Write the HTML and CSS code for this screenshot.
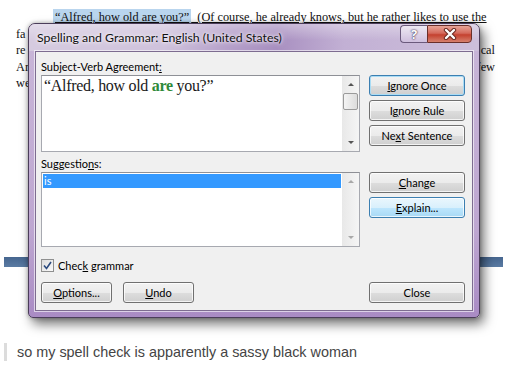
FILE: index.html
```html
<!DOCTYPE html>
<html lang="en">
<head>
    <meta charset="UTF-8">
    <meta name="viewport" content="width=device-width, initial-scale=1.0">
    <title>Spell check</title>
    <link rel="stylesheet" href="styles.css">
</head>
<body>
    <div class="page">
        <!-- document behind the dialog, only the edges show -->
        <div class="article">
            <p class="line first"><span class="sel">“Alfred, how old are you?”</span>&nbsp; (Of course, he already knows, but he rather likes to use the</p>
            <p class="line"><span>fa</span><span></span></p>
            <p class="line"><span>re</span><span>cal</span></p>
            <p class="line"><span>Ar</span><span>few</span></p>
            <p class="line"><span>we</span><span></span></p>
        </div>
        <div class="rule"></div>
        <blockquote class="caption">so my spell check is apparently a sassy black woman</blockquote>

        <!-- the dialog window -->
        <div class="dialog">
            <div class="titlebar">
                <span class="title">Spelling and Grammar: English (United States)</span>
                <div class="caption-btns">
                    <span class="cap-btn help">?</span>
                    <span class="cap-btn close">
                        <svg width="14" height="12" viewBox="0 0 14 12">
                            <path d="M3 2 L11 10 M11 2 L3 10" stroke="#6b2a22" stroke-width="4.4" stroke-linecap="round"/>
                            <path d="M3 2 L11 10 M11 2 L3 10" stroke="#fff" stroke-width="2.4" stroke-linecap="round"/>
                        </svg>
                    </span>
                </div>
            </div>
            <div class="client">
                <div class="grid">
                    <div class="label top-label">Subject-Verb Agreement<u>:</u></div>
                    <div></div>

                    <div class="box sentence-box">
                        <div class="box-text sentence">“Alfred, how old <b class="err">are</b> you?”</div>
                        <div class="scroll">
                            <span class="arrow up"></span>
                            <span class="thumb"></span>
                            <span class="spacer"></span>
                            <span class="arrow down"></span>
                        </div>
                    </div>
                    <div class="btn-stack">
                        <button class="btn default"><u>I</u>gnore Once</button>
                        <button class="btn">I<u>g</u>nore Rule</button>
                        <button class="btn">Ne<u>x</u>t Sentence</button>
                    </div>

                    <div class="label sugg-label">Suggestio<u>n</u>s:</div>
                    <div></div>

                    <div class="box list-box">
                        <div class="box-text list">
                            <div class="item selected">is</div>
                        </div>
                        <div class="scroll disabled">
                            <span class="arrow up"></span>
                            <span class="spacer"></span>
                            <span class="arrow down"></span>
                        </div>
                    </div>
                    <div class="btn-stack">
                        <button class="btn"><u>C</u>hange</button>
                        <button class="btn hover"><u>E</u>xplain...</button>
                    </div>

                    <div class="check-row">
                        <span class="checkbox">
                            <svg width="9" height="9" viewBox="0 0 9 9">
                                <path d="M1 4.5 L3.5 7.5 L8 1" fill="none" stroke="#2b4a7e" stroke-width="1.6"/>
                            </svg>
                        </span>
                        <span>Chec<u>k</u> grammar</span>
                    </div>

                    <div class="bottom-row">
                        <button class="btn small"><u>O</u>ptions...</button>
                        <button class="btn small"><u>U</u>ndo</button>
                        <button class="btn wide">Close</button>
                    </div>
                </div>
            </div>
        </div>
    </div>
</body>
</html>
```

FILE: styles.css
```css
body {
    margin: 0;
    background: #fff;
}
.page {
    position: relative;
    width: 506px;
    height: 365px;
    overflow: hidden;
}

/* background document */
.article {
    padding: 9px 11px 0 16px;
    font-family: "Liberation Serif", serif;
    font-size: 12.3px;
    line-height: 16.5px;
    color: #111;
}
.line {
    margin: 0;
    display: flex;
    justify-content: space-between;
    white-space: nowrap;
}
.line.first {
    justify-content: flex-start;
    padding-left: 37px;
    text-decoration: underline;
}
.sel {
    background: #b9d5ee;
    padding: 0 2px;
}
.rule {
    height: 10px;
    margin: 165px 3px 0 4px;
    background: linear-gradient(#46668f, #5a7ba3);
}
.caption {
    margin: 76px 0 0 4px;
    padding-left: 10px;
    border-left: 3px solid #dcdcdc;
    font-family: "Liberation Sans", Arial, sans-serif;
    font-size: 14.4px;
    line-height: 18px;
    color: #444;
}

/* dialog */
.dialog {
    position: absolute;
    left: 28px;
    top: 23px;
    width: 452px;
    height: 295px;
    box-sizing: border-box;
    border: 1px solid #4b3d5a;
    border-radius: 7px 7px 5px 5px;
    background: linear-gradient(#c9b7d8, #bea7d1 70%, #a98bc4);
    box-shadow: 4px 6px 12px rgba(0, 0, 0, 0.55), 0 0 4px rgba(0, 0, 0, 0.3);
    font-family: Lato, sans-serif;
    font-size: 11px;
    color: #000;
}
.titlebar {
    height: 27px;
    display: flex;
    align-items: center;
    justify-content: space-between;
    padding: 0 7px 0 8px;
    border-radius: 6px 6px 0 0;
    background:
        linear-gradient(rgba(255, 255, 255, 0.35), rgba(255, 255, 255, 0) 60%),
        linear-gradient(90deg, #d6cbe0 0%, #cfc2dc 30%, #b49ec9 45%, #a88fc0 55%, #c2b0d4 70%, #cdbfdb 100%);
}
.title {
    font-size: 12.3px;
    color: #111;
    text-shadow: 0 0 6px #fff, 0 0 3px #fff;
    margin-top: -1px;
}
.caption-btns {
    display: flex;
    align-self: flex-start;
    margin-top: 1px;
}
.cap-btn {
    height: 18px;
    box-sizing: border-box;
    display: flex;
    align-items: center;
    justify-content: center;
    border: 1px solid #6b5a7c;
}
.help {
    width: 27px;
    border-radius: 4px 0 0 4px;
    border-right: none;
    background: linear-gradient(rgba(255, 255, 255, 0.55), rgba(220, 205, 232, 0.4));
    color: #fff;
    font-family: "Noto Sans", sans-serif;
    font-weight: bold;
    font-size: 13px;
    text-shadow: 0 0 2px #3a2a4a, 0 0 1px #3a2a4a;
}
.close {
    width: 45px;
    border-radius: 0 4px 4px 0;
    border-color: #6a2f2a;
    background: linear-gradient(#e8a598, #d4695b 45%, #c4412f 55%, #d6806d);
}

.client {
    margin: 0 6px;
    height: 260px;
    box-sizing: border-box;
    border: 1px solid #7d6c90;
    background: #f0f0f0;
    box-shadow: 0 0 0 1px rgba(255, 255, 255, 0.6);
    padding: 0 7px 7px 5px;
}
.grid {
    display: grid;
    grid-template-columns: 319px 96px;
    column-gap: 9px;
}
.label {
    line-height: 15px;
}
.top-label {
    height: 23px;
    box-sizing: border-box;
    padding-top: 7px;
}
.sugg-label {
    height: 20px;
    box-sizing: border-box;
    padding-top: 4px;
}

.box {
    display: flex;
    box-sizing: border-box;
    border: 1px solid #a7a9b0;
    border-top-color: #8e9096;
    background: #fff;
}
.sentence-box {
    height: 77px;
}
.list-box {
    height: 75px;
}
.box-text {
    flex: 1;
}
.sentence {
    padding: 0 0 0 2px;
    font-family: "Liberation Serif", serif;
    font-size: 16px;
    letter-spacing: -0.3px;
    line-height: 20px;
    color: #1a1a1a;
}
.err {
    color: #2f8a3a;
}
.list {
    padding: 1px 1px 0 1px;
}
.item {
    height: 14px;
    line-height: 14px;
    padding-left: 1px;
}
.item.selected {
    background: #3399ff;
    color: #fff;
}
.scroll {
    width: 17px;
    display: flex;
    flex-direction: column;
    background: linear-gradient(90deg, #e8e8e8, #f5f5f5);
}
.spacer {
    flex: 1;
}
.arrow {
    height: 17px;
    display: flex;
    align-items: center;
    justify-content: center;
}
.arrow::before {
    content: "";
    border-left: 3px solid transparent;
    border-right: 3px solid transparent;
}
.arrow.up::before {
    border-bottom: 3px solid #555;
}
.arrow.down::before {
    border-top: 3px solid #555;
}
.disabled .arrow.up::before {
    border-bottom-color: #a8a8a8;
}
.disabled .arrow.down::before {
    border-top-color: #a8a8a8;
}
.thumb {
    height: 15px;
    margin: 0 1px;
    border: 1px solid #9a9a9a;
    border-radius: 2px;
    background: linear-gradient(90deg, #f4f4f4, #dcdcdc);
}

.btn-stack {
    display: flex;
    flex-direction: column;
    gap: 4px;
}
.btn {
    height: 21px;
    padding: 0;
    box-sizing: border-box;
    border: 1px solid #707070;
    border-radius: 3px;
    background: linear-gradient(#f2f2f2, #ebebeb 50%, #dddddd 51%, #cfcfcf);
    box-shadow: inset 0 0 0 1px rgba(255, 255, 255, 0.75);
    font-family: Lato, sans-serif;
    font-size: 11px;
    color: #000;
    cursor: pointer;
}
.btn.default {
    border-color: #3c7fb1;
    box-shadow: inset 0 0 0 1px #a9dcf5;
}
.btn.hover {
    border-color: #3c7fb1;
    background: linear-gradient(#eaf6fd, #d9f0fc 50%, #bee6fd 51%, #a7d9f5);
}

.check-row {
    grid-column: 1 / 3;
    height: 35px;
    box-sizing: border-box;
    padding-top: 1px;
    display: flex;
    align-items: center;
    gap: 4px;
}
.checkbox {
    width: 13px;
    height: 13px;
    box-sizing: border-box;
    border: 1px solid #8e8f8f;
    background: linear-gradient(135deg, #dcdcdc, #fafafa);
    display: flex;
    align-items: center;
    justify-content: center;
}
.bottom-row {
    grid-column: 1 / 3;
    display: flex;
    gap: 11px;
}
.btn.small {
    width: 71px;
}
.btn.wide {
    width: 96px;
    margin-left: auto;
}
```
